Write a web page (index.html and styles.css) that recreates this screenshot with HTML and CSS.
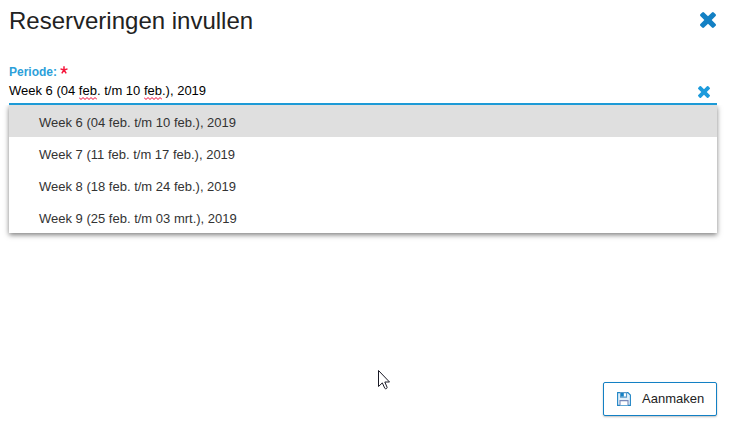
FILE: index.html
```html
<!DOCTYPE html>
<html lang="nl">
<head>
<meta charset="utf-8">
<title>Reserveringen invullen</title>
<link rel="stylesheet" href="styles.css">
</head>
<body>
<svg class="defs" width="0" height="0"><symbol id="times" viewBox="302 366 1188 1188"><path d="M1490 1322q0 40-28 68l-136 136q-28 28-68 28t-68-28l-294-294-294 294q-28 28-68 28t-68-28l-136-136q-28-28-28-68t28-68l294-294-294-294q-28-28-28-68t28-68l136-136q28-28 68-28t68 28l294 294 294-294q28-28 68-28t68 28l136 136q28 28 28 68t-28 68l-294 294 294 294q28 28 28 68z"/></symbol><symbol id="wave" viewBox="0 0 18 3"><path d="M0 .5l2 2 2-2 2 2 2-2 2 2 2-2 2 2 2-2 2 2"/></symbol></svg>
<main class="dialog">
  <header class="header">
    <h1 class="title">Reserveringen invullen</h1>
    <svg class="close"><use href="#times"/></svg>
  </header>
  <section class="field">
    <div class="label"><span>Periode:</span><svg class="required" viewBox="0 0 8 8"><path d="M4 4V.2M4 4L.5 2.9M4 4l3.5-1.1M4 4L1.8 7.3M4 4l2.2 3.3"/></svg></div>
    <div class="input">
      <span class="value">Week 6 (04 <span class="misspelled">feb<svg class="wave"><use href="#wave"/></svg></span>. t/m 10 <span class="misspelled">feb<svg class="wave"><use href="#wave"/></svg></span>.), 2019</span>
      <svg class="clear"><use href="#times"/></svg>
    </div>
    <ul class="options">
      <li class="option selected">Week 6 (04 feb. t/m 10 feb.), 2019</li>
      <li class="option">Week 7 (11 feb. t/m 17 feb.), 2019</li>
      <li class="option">Week 8 (18 feb. t/m 24 feb.), 2019</li>
      <li class="option">Week 9 (25 feb. t/m 03 mrt.), 2019</li>
    </ul>
  </section>
  <footer class="footer">
    <button class="create"><svg class="save" viewBox="0 0 14 14"><path class="save-body" d="M.6.6h10.3l2.5 2.5v10.3H.6z"/><path class="save-slot" d="M3.5.6h6v4.5h-6z"/><path class="save-tab" d="M4 1h2.8v3.6H4z"/><path class="save-paper" d="M3 13.3V8.6h8v4.7"/></svg><span>Aanmaken</span></button>
  </footer>
  <svg class="pointer" viewBox="0 0 12 20"><path d="M.5.5v16l3.8-3.6 2.5 5.4c.6 1 2.7.2 2.3-1L6.8 12h4.7z"/></svg>
</main>
</body>
</html>
```

FILE: styles.css
```css
* { box-sizing: border-box; }
body {
  margin: 0;
  background: #fff;
  color: #222;
  font: 13px/16px "Liberation Sans", Arial, sans-serif;
}
.defs { position: absolute; }
.dialog {
  position: relative;
  display: flex;
  flex-direction: column;
  height: 425px;
  padding: 0 17px 9px 9px;
}
.header {
  display: flex;
  justify-content: space-between;
  align-items: flex-start;
  height: 64px;
  padding-top: 6px;
}
.title {
  margin: 0;
  font-size: 24px;
  font-weight: 400;
  line-height: 30px;
}
.close { width: 16px; height: 16px; margin: 6px 1px 0 0; fill: #1380c4; }
.label {
  display: flex;
  align-items: center;
  gap: 3px;
  height: 16px;
  color: #2c9fda;
  font-size: 12px;
  font-weight: 700;
}
.required { width: 8px; height: 8px; margin-bottom: 4px; fill: none; stroke: #f5163b; stroke-width: 1.5; }
.input {
  display: flex;
  justify-content: space-between;
  align-items: flex-start;
  height: 25px;
  padding-top: 3px;
  border-bottom: 2px solid #1d9ad6;
  color: #000;
}
.misspelled { position: relative; }
.wave {
  position: absolute;
  left: 0;
  bottom: -2px;
  width: 18px;
  height: 3px;
  fill: none;
  stroke: #f00030;
  stroke-width: 1;
}
.clear { width: 12px; height: 12px; margin: 3px 7px 0 0; fill: #1d9bdc; }
.options {
  margin: 0;
  padding: 0;
  list-style: none;
  background: #fff;
  box-shadow: 0 2px 5px rgba(0, 0, 0, .5);
  clip-path: inset(0 -10px -12px -10px);
}
.option { height: 32px; padding: 10px 30px 6px; color: #333; }
.selected { background: #dfdfdf; }
.footer { display: flex; justify-content: flex-end; margin-top: auto; }
.create {
  display: flex;
  align-items: center;
  gap: 11px;
  width: 114px;
  height: 34px;
  padding: 0 0 0 13px;
  border: 1px solid #1380c4;
  border-radius: 2px;
  background: #fff;
  box-shadow: 0 1px 2px rgba(0, 0, 0, .25);
  color: #222;
  font: inherit;
}
.save { width: 14px; height: 14px; fill: none; stroke-width: 1.1; }
.save-body { fill: #e2f0fa; stroke: #2186c6; }
.save-slot { fill: #fff; stroke: #5999c9; }
.save-tab { fill: #1380c4; }
.save-paper { fill: #fff; stroke: #7888b8; }
.pointer {
  position: absolute;
  left: 378px;
  top: 370px;
  width: 12px;
  height: 20px;
  fill: #fff;
  stroke: #1a1a26;
}
```
